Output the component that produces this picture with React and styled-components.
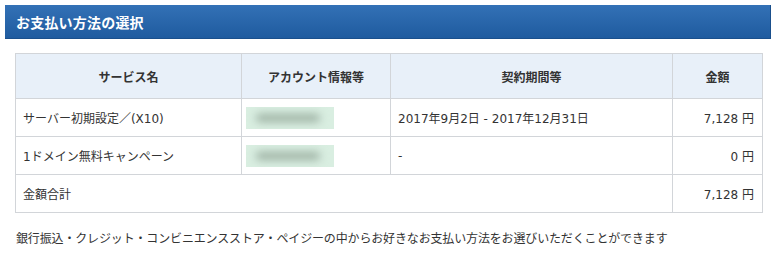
import React from "react";
import styled, { createGlobalStyle } from "styled-components";

const GlobalStyle = createGlobalStyle`
  body {
    margin: 0;
    background: #fff;
    font-family: "DejaVu Sans", "Noto Sans CJK JP", sans-serif;
    color: #333;
  }
`;

const Page = styled.div`
  width: 780px;
  padding: 5px 0 0;
  box-sizing: border-box;
`;

const TitleBar = styled.h2`
  margin: 0 9px 0 5px;
  height: 34px;
  box-sizing: border-box;
  padding: 0 11px;
  display: flex;
  align-items: center;
  background: linear-gradient(#3371b6, #1f5b9f);
  border-bottom: 1px solid #1a4f8c;
  border-right: 1px solid #1a4f8c;
  color: #fff;
  font-size: 14px;
  font-weight: bold;
  letter-spacing: 0.2px;
`;

const Table = styled.table`
  margin: 14px 0 0 15px;
  width: 747px;
  border-collapse: collapse;
  table-layout: fixed;
  font-size: 12px;
`;

const Th = styled.th`
  height: 44px;
  padding: 0;
  background: #e8f0f9;
  border: 1px solid #d2d5d9;
  font-weight: bold;
  color: #333;
  text-align: center;
`;

const Td = styled.td`
  height: 37px;
  padding: 0 7px;
  border: 1px solid #d2d5d9;
  text-align: ${(p) => (p.$right ? "right" : "left")};
  padding-right: ${(p) => (p.$right ? "8px" : "7px")};
  white-space: nowrap;
`;

// account names are masked out with a soft green block
const Masked = styled.div`
  position: relative;
  width: 88px;
  height: 22px;
  margin-left: -3px;
  background: #d9eee1;
  overflow: hidden;

  &::after {
    content: "";
    position: absolute;
    left: 10px;
    right: 14px;
    top: 7px;
    height: 8px;
    border-radius: 4px;
    background: #9cb0a2;
    filter: blur(4px);
  }
`;

const Note = styled.p`
  margin: 17px 0 0 16px;
  font-size: 12px;
  line-height: 18px;
  letter-spacing: -0.15px;
  color: #333;
`;

const rows = [
  { name: "サーバー初期設定／(X10)", period: "2017年9月2日 - 2017年12月31日", price: "7,128 円" },
  { name: "1ドメイン無料キャンペーン", period: "-", price: "0 円" },
];

export default function App() {
  return (
    <Page>
      <GlobalStyle />
      <TitleBar>お支払い方法の選択</TitleBar>
      <Table>
        <colgroup>
          <col style={{ width: 226 }} />
          <col style={{ width: 149 }} />
          <col style={{ width: 282 }} />
          <col style={{ width: 90 }} />
        </colgroup>
        <thead>
          <tr>
            <Th>サービス名</Th>
            <Th>アカウント情報等</Th>
            <Th>契約期間等</Th>
            <Th>金額</Th>
          </tr>
        </thead>
        <tbody>
          {rows.map((r) => (
            <tr key={r.name}>
              <Td>{r.name}</Td>
              <Td>
                <Masked />
              </Td>
              <Td>{r.period}</Td>
              <Td $right>{r.price}</Td>
            </tr>
          ))}
          <tr>
            <Td colSpan={3}>金額合計</Td>
            <Td $right>7,128 円</Td>
          </tr>
        </tbody>
      </Table>
      <Note>
        銀行振込・クレジット・コンビニエンスストア・ペイジーの中からお好きなお支払い方法をお選びいただくことができます
      </Note>
    </Page>
  );
}
